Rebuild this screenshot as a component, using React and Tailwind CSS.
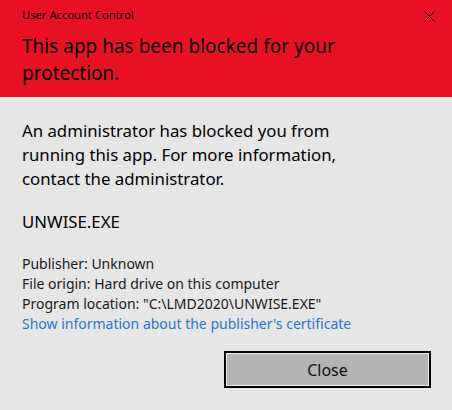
const App = () => {
  return (
    <div
      className="w-[452px] h-[410px] bg-[#e6e6e6] text-black overflow-hidden"
      style={{ fontFamily: '"Noto Sans", "Open Sans", sans-serif' }}
    >
      <div className="bg-[#e81123] h-[97px] pl-[22px] pr-[16px] pt-[6px]">
        <div className="flex items-start justify-between">
          <span className="text-[11.2px] leading-[18px]">User Account Control</span>
          <svg width="11" height="11" viewBox="0 0 11 11" className="mt-[5px] mr-[1px]">
            <path d="M0.5 0.5L10.5 10.5M10.5 0.5L0.5 10.5" stroke="#000" strokeWidth="1" />
          </svg>
        </div>
        <h1 className="mt-[9px] text-[19px] leading-[27px] font-normal">
          This app has been blocked for your
          <br />
          protection.
        </h1>
      </div>

      <div className="pl-[22px] pr-[21px] pt-[22px]">
        <p className="text-[16.8px] leading-[24px]">
          An administrator has blocked you from
          <br />
          running this app. For more information,
          <br />
          contact the administrator.
        </p>
        <p className="mt-[19px] text-[16.8px] leading-[24px]">UNWISE.EXE</p>

        <div className="mt-[20px] text-[14px] leading-[20px] text-[#1a1a1a]">
          <p>Publisher: Unknown</p>
          <p>File origin: Hard drive on this computer</p>
          <p>Program location: "C:\LMD2020\UNWISE.EXE"</p>
          <p className="text-[#1f78d1]">Show information about the publisher's certificate</p>
        </div>

        <div className="flex justify-end mt-[17px]">
          <button className="w-[207px] h-[37px] border-2 border-black bg-[#b4b4b4] text-[16px] text-[#111] shadow-[inset_0_0_0_1px_#ececec]">
            Close
          </button>
        </div>
      </div>
    </div>
  );
};

export default App;
